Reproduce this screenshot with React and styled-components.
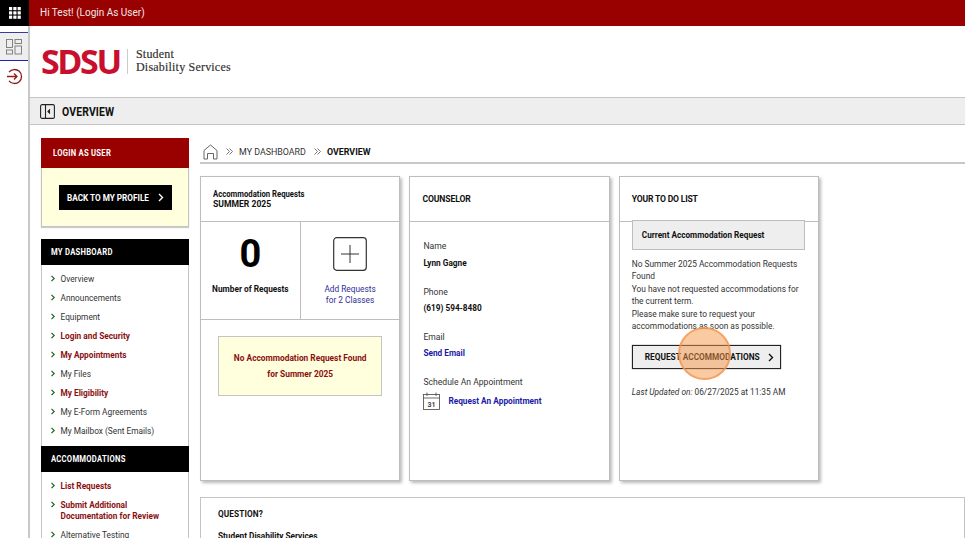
import React from "react";
import styled, { createGlobalStyle } from "styled-components";

const Global = createGlobalStyle`
  html, body { margin: 0; padding: 0; height: 100%; overflow: hidden; background: #fff; }
  body { font-family: Roboto, "Liberation Sans", sans-serif; color: #222; }
  * { box-sizing: border-box; }
`;

const Page = styled.div`position: relative; width: 965px; height: 538px; overflow: hidden;`;
const TopBar = styled.header`display: flex; height: 26px; background: #990000;`;
const AppsButton = styled.div`width: 29px; background: #000; display: flex; align-items: center; justify-content: center;`;
const Greeting = styled.div`padding-left: 11px; color: #f4e6e6; font-size: 10px; line-height: 26px;`;
const Body = styled.div`display: flex; height: 512px;`;
const Rail = styled.nav`width: 30px; flex: none; border-right: 2px solid #c8c8c8; padding-top: 6px;`;
const RailItem = styled.div`
  height: ${p => p.$active ? 29 : 30}px; display: flex; align-items: center; justify-content: center;
  background: ${p => p.$active ? "#eeeeee" : "transparent"};
  border-top: ${p => p.$active ? "1px solid #3a3aa0" : "none"};
  border-bottom: ${p => p.$active ? "1px solid #2020c0" : "none"};
`;
const Content = styled.div`flex: 1; min-width: 0;`;
const LogoRow = styled.div`height: 71px; display: flex; align-items: center; padding: 0 0 1px 11px;`;
const LogoMark = styled.div`font: 700 34px/1 "Open Sans", "Liberation Sans", sans-serif; color: #c8102e; letter-spacing: -2.4px; border-right: 1px solid #ccc; height: 25px; display: flex; align-items: center; width: 87px;`;
const LogoText = styled.div`font: 400 12px/12.8px "Liberation Serif", serif; color: #2e2e2e; padding-left: 8px; letter-spacing: .2px; -webkit-text-stroke: .15px #2e2e2e;`;
const TitleBar = styled.div`height: 28px; background: #eeeeee; border-top: 1px solid #c4c4c4; border-bottom: 1px solid #c4c4c4; display: flex; align-items: center; padding-left: 10px; gap: 7px;`;
const Title = styled.h1`margin: 0; font-size: 13px; font-weight: 700; color: #111; transform: scaleX(.8); transform-origin: left; letter-spacing: .2px;`;
const Columns = styled.div`display: flex; padding: 13px 0 0 11px; gap: 11px;`;
const Sidebar = styled.aside`width: 148px; flex: none;`;
const SideHead = styled.div`
  height: ${p => p.$h}px; background: ${p => p.$red ? "#990000" : "#000"}; color: #fff;
  display: flex; align-items: center; padding-left: ${p => p.$red ? 12 : 10}px;
`;
const SideHeadText = styled.span`font-size: 8.8px; font-weight: 700; letter-spacing: .3px; transform: scaleX(.87); transform-origin: left; white-space: nowrap;`;
const ProfileBox = styled.div`height: 59px; background: #ffffdd; border: 1px solid #c4c4c4; border-top: none; padding: 17px 0 0 17px; margin-bottom: 12px; box-shadow: 0 1px 1px #ccc;`;
const BlackButton = styled.div`width: 113px; height: 25px; background: #000; color: #fff; font-size: 8.2px; font-weight: 700; display: flex; align-items: center; justify-content: space-between; padding: 0 8px 0 8px;`;
const SideList = styled.ul`list-style: none; margin: 0; padding: 5.4px 0 4.6px 9px; border-left: 1px solid #c4c4c4; border-right: 1px solid #c4c4c4;`;
const SideItem = styled.li`
  display: flex; gap: 5.5px; font-size: 8.3px; line-height: 10.5px; padding: 4px 0 4.5px;
  color: ${p => p.$strong ? "#8a1010" : "#333"}; font-weight: ${p => p.$strong ? 700 : 400};
`;
const Chevron = styled.span`flex: none; width: 4px; margin-top: 1px; display: block; line-height: 0;`;
const Main = styled.main`flex: 1; min-width: 0;`;
const Crumbs = styled.div`height: 26px; border-bottom: 2px solid #c8c8c8; display: flex; align-items: center; padding: 3px 0 0 3px; font-size: 8.9px; color: #333;`;
const CrumbSep = styled.span`margin: 0 6px 0 8px; line-height: 0;`;
const CrumbNow = styled.b`color: #111;`;
const Cards = styled.div`display: flex; gap: 9px; padding-top: 12px;`;
const Card = styled.section`width: 200.4px; height: 305px; border: 1px solid #bdbdbd; box-shadow: 2px 2px 3px #bbb; background: #fff; flex: none;`;
const CardHead = styled.div`height: 45px; border-bottom: 1px solid #bdbdbd; display: flex; flex-direction: column; justify-content: center; align-items: flex-start; padding-left: 12px; font-size: 8.6px; line-height: 11px; font-weight: 700; color: #111;`;
const NarrowLine = styled.span`font-size: 9.2px; white-space: nowrap; transform: scaleX(.84); transform-origin: left;`;
const CardTitle = styled.span`font-size: ${p => p.$size}px; letter-spacing: ${p => p.$spacing}px;`;
const Stats = styled.div`display: flex; height: 98px; border-bottom: 1px solid #bdbdbd;`;
const Stat = styled.div`flex: 1; display: flex; flex-direction: column; align-items: center; padding-top: ${p => p.$pt}px; font-size: 8.3px; line-height: 11px; text-align: center; border-left: ${p => p.$divided ? "1px solid #bdbdbd" : "none"};`;
const Big = styled.div`font-size: 38px; font-weight: 700; line-height: 44px; color: #000; margin: 1px 0 8px;`;
const StatLabel = styled.b`color: #111;`;
const AddLink = styled.div`color: #2e2e96; margin-top: 13px;`;
const Alert = styled.div`margin: 16px 17px 0; height: 60px; background: #ffffdd; border: 1px solid #c4c4c4; color: #8a1010; font-weight: 700; font-size: 8.35px; line-height: 16px; text-align: center; display: flex; flex-direction: column; justify-content: center;`;
const Info = styled.div`padding: 19.4px 12px 0 13px;`;
const InfoLabel = styled.div`font-size: 8.6px; line-height: 11px; color: #333;`;
const InfoValue = styled.div`font-size: 8.25px; line-height: 11px; font-weight: 700; color: ${p => p.$link ? "#1a1aa8" : "#111"}; margin: 5.2px 0 18px;`;
const ApptRow = styled.div`display: flex; align-items: center; gap: 8px; margin-top: 4px; font-size: 8.3px; font-weight: 700; color: #1a1aa8;`;
const Todo = styled.div`padding: 0 12px 0 12px; margin-top: -2px;`;
const TodoBox = styled.div`height: 30px; width: 173px; background: #eeeeee; border: 1px solid #bdbdbd; display: flex; align-items: center; padding-left: 9px; font-size: 8.2px; font-weight: 700; color: #111;`;
const TodoText = styled.p`margin: 8px 0 0; font-size: 8.35px; line-height: 12.4px; color: #333;`;
const OutlineButton = styled.div`width: 149px; height: 24px; margin-top: 13px; border: 1px solid #222; background: #eeeeee; display: flex; align-items: center; justify-content: space-between; padding: 0 6px 0 12px; font-size: 8.3px; font-weight: 700; color: #111; box-shadow: 0 0 1px #555;`;
const Updated = styled.div`font-size: 8.3px; margin-top: 18px; color: #333;`;
const Question = styled.section`margin-top: 16px; height: 80px; border: 1px solid #c4c4c4; padding: 11px 17px; font-size: 8.25px; color: #111; font-weight: 700;`;
const QuestionTitle = styled.div`line-height: 11px; margin-bottom: 11px; letter-spacing: .1px;`;
const Pointer = styled.div`position: absolute; left: 678px; top: 327px; width: 53px; height: 53px; border-radius: 50%; background: rgba(245,150,70,.5); border: 2px solid rgba(240,150,80,.75);`;

const Chev = ({ c = "#1f5f1f" }) => (
  <Chevron><svg width="4" height="7" viewBox="0 0 4 7" display="block"><path d="M.5.8 3.2 3.5.5 6.2" fill="none" stroke={c} strokeWidth="1.2" /></svg></Chevron>
);
const Right = ({ c = "#fff" }) => (
  <svg width="6" height="9" viewBox="0 0 6 9"><path d="M1 1l3.5 3.5L1 8" fill="none" stroke={c} strokeWidth="1.4" /></svg>
);
const DoubleChev = () => (
  <svg width="7" height="7" viewBox="0 0 7 7" fill="none" stroke="#555" strokeWidth=".8">
    <path d="M.5.5l3 3-3 3M3.5.5l3 3-3 3" />
  </svg>
);
const Item = ({ children, strong }) => <SideItem $strong={strong}><Chev />{children}</SideItem>;

export default function App() {
  return (
    <Page>
      <Global />
      <TopBar>
        <AppsButton>
          <svg width="12" height="12" viewBox="0 0 12 12" fill="#fff">
            {[0, 4.3, 8.6].flatMap(y => [0, 4.3, 8.6].map(x => <rect key={`${x}-${y}`} x={x} y={y} width="3.2" height="3.2" />))}
          </svg>
        </AppsButton>
        <Greeting>Hi Test! (Login As User)</Greeting>
      </TopBar>
      <Body>
        <Rail>
          <RailItem $active>
            <svg width="16" height="16" viewBox="0 0 16 16" fill="none" stroke="#777" strokeWidth=".9">
              <rect x=".5" y=".5" width="6" height="8" /><rect x="9" y=".5" width="6.5" height="4" /><rect x=".5" y="11" width="6" height="4" /><rect x="9" y="7" width="6.5" height="8" />
            </svg>
          </RailItem>
          <RailItem>
            <svg width="17" height="17" viewBox="0 0 17 17" fill="none" stroke="#8f1d1d" strokeWidth="1.3">
              <path d="M3 4.2A7 7 0 1 1 3 12.8" /><path d="M1 8.5h10M8 5.5l3 3-3 3" />
            </svg>
          </RailItem>
        </Rail>
        <Content>
          <LogoRow>
            <LogoMark>SDSU</LogoMark>
            <LogoText>Student<br />Disability Services</LogoText>
          </LogoRow>
          <TitleBar>
            <svg width="15" height="15" viewBox="0 0 15 15" fill="none" stroke="#222" strokeWidth="1.1">
              <rect x=".6" y=".6" width="13.8" height="13.8" rx="1.5" /><path d="M5.5.6v13.8" /><path d="M10 5.5 8 7.5l2 2" fill="#222" />
            </svg>
            <Title>OVERVIEW</Title>
          </TitleBar>
          <Columns>
            <Sidebar>
              <SideHead $red $h={30}><SideHeadText>LOGIN AS USER</SideHeadText></SideHead>
              <ProfileBox>
                <BlackButton>BACK TO MY PROFILE <Right /></BlackButton>
              </ProfileBox>
              <SideHead $h={26}><SideHeadText>MY DASHBOARD</SideHeadText></SideHead>
              <SideList>
                <Item>Overview</Item>
                <Item>Announcements</Item>
                <Item>Equipment</Item>
                <Item strong>Login and Security</Item>
                <Item strong>My Appointments</Item>
                <Item>My Files</Item>
                <Item strong>My Eligibility</Item>
                <Item>My E-Form Agreements</Item>
                <Item>My Mailbox (Sent Emails)</Item>
              </SideList>
              <SideHead $h={26}><SideHeadText>ACCOMMODATIONS</SideHeadText></SideHead>
              <SideList>
                <Item strong>List Requests</Item>
                <Item strong><span>Submit Additional<br />Documentation for Review</span></Item>
                <Item>Alternative Testing</Item>
              </SideList>
            </Sidebar>
            <Main>
              <Crumbs>
                <svg width="15" height="16" viewBox="0 0 15 16" fill="none" stroke="#666" strokeWidth="1">
                  <path d="M1 6.5 7.5 1 14 6.5V15h-3.5V9.5h-6V15H1z" />
                </svg>
                <CrumbSep><DoubleChev /></CrumbSep>MY DASHBOARD<CrumbSep><DoubleChev /></CrumbSep><CrumbNow>OVERVIEW</CrumbNow>
              </Crumbs>
              <Cards>
                <Card>
                  <CardHead><NarrowLine>Accommodation Requests</NarrowLine>SUMMER 2025</CardHead>
                  <Stats>
                    <Stat $pt={9}><Big>0</Big><StatLabel>Number of Requests</StatLabel></Stat>
                    <Stat $divided $pt={15}>
                      <svg width="34" height="34" viewBox="0 0 34 34" fill="none" stroke="#333">
                        <rect x=".7" y=".7" width="32.6" height="32.6" rx="3" strokeWidth="1.2" /><path d="M17 8v18M8 17h18" strokeWidth="1" />
                      </svg>
                      <AddLink>Add Requests<br />for 2 Classes</AddLink>
                    </Stat>
                  </Stats>
                  <Alert>No Accommodation Request Found<br />for Summer 2025</Alert>
                </Card>
                <Card>
                  <CardHead><CardTitle $size={8.6} $spacing={-0.1}>COUNSELOR</CardTitle></CardHead>
                  <Info>
                    <InfoLabel>Name</InfoLabel><InfoValue>Lynn Gagne</InfoValue>
                    <InfoLabel>Phone</InfoLabel><InfoValue>(619) 594-8480</InfoValue>
                    <InfoLabel>Email</InfoLabel><InfoValue $link>Send Email</InfoValue>
                    <InfoLabel>Schedule An Appointment</InfoLabel>
                    <ApptRow>
                      <svg width="17" height="18" viewBox="0 0 17 18" fill="none" stroke="#444" strokeWidth=".8">
                        <rect x=".5" y="2.5" width="16" height="15" /><path d="M.5 6h16M4 .5v3.5M13 .5v3.5" />
                        <text x="8.5" y="15" fontSize="7" textAnchor="middle" fill="#444" stroke="none" fontFamily="Roboto">31</text>
                      </svg>
                      Request An Appointment
                    </ApptRow>
                  </Info>
                </Card>
                <Card>
                  <CardHead><CardTitle $size={8.6} $spacing={-0.2}>YOUR TO DO LIST</CardTitle></CardHead>
                  <Todo>
                    <TodoBox>Current Accommodation Request</TodoBox>
                    <TodoText>No Summer 2025 Accommodation Requests Found<br />You have not requested accommodations for the current term.<br />Please make sure to request your accommodations as soon as possible.</TodoText>
                    <OutlineButton>REQUEST ACCOMMODATIONS <Right c="#111" /></OutlineButton>
                    <Updated><i>Last Updated on:</i> 06/27/2025 at 11:35 AM</Updated>
                  </Todo>
                </Card>
              </Cards>
              <Question>
                <QuestionTitle>QUESTION?</QuestionTitle>
                Student Disability Services
              </Question>
            </Main>
          </Columns>
        </Content>
      </Body>
      <Pointer />
    </Page>
  );
}
